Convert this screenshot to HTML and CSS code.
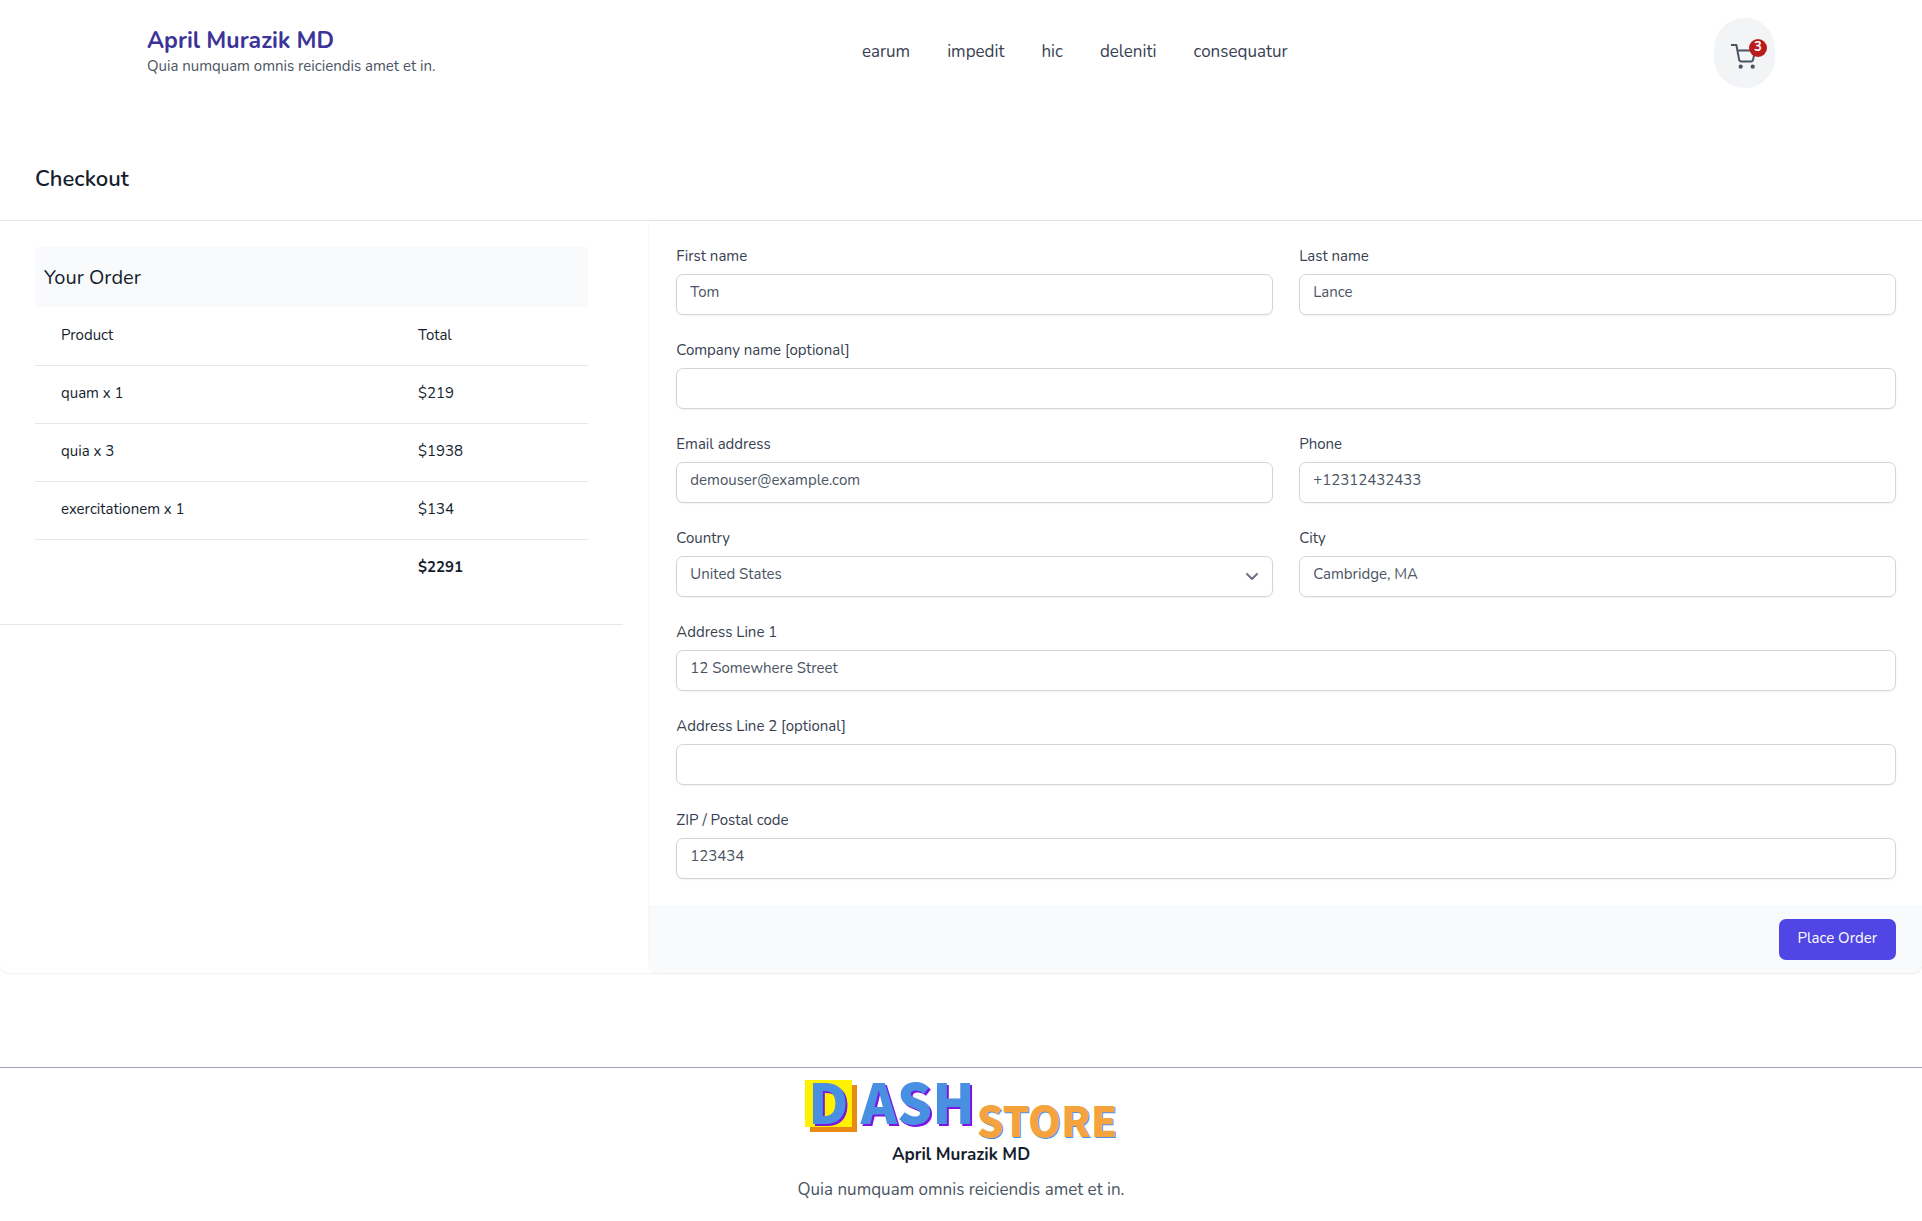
FILE: index.html
```html
<!DOCTYPE html>
<html lang="en">
<head>
<meta charset="utf-8">
<meta name="viewport" content="width=device-width, initial-scale=1">
<title>Checkout</title>
<link rel="stylesheet" href="styles.css">
</head>
<body>
<header class="site-header">
  <div class="brand">
    <a class="brand-name" href="#">April Murazik MD</a>
    <p class="brand-tagline">Quia numquam omnis reiciendis amet et in.</p>
  </div>
  <nav class="site-nav">
    <a href="#">earum</a>
    <a href="#">impedit</a>
    <a href="#">hic</a>
    <a href="#">deleniti</a>
    <a href="#">consequatur</a>
  </nav>
  <button class="cart" type="button" aria-label="Cart">
    <svg class="cart-icon" viewBox="0 0 26 26" fill="none" stroke="currentColor" stroke-width="2" stroke-linejoin="round">
      <path d="M0 2h5.400l2.700 14.600q.4 1.900 2.300 1.900h9.400q1.900 0 2.300-1.900L24 7.500H6.400"/>
      <circle cx="9.700" cy="23.700" r="2.100" fill="currentColor" stroke="none"/>
      <circle cx="21.700" cy="23.700" r="2.100" fill="currentColor" stroke="none"/>
    </svg>
    <span class="cart-count">3</span>
  </button>
</header>
<main>
  <h1 class="page-title">Checkout</h1>
  <div class="checkout">
    <section class="summary">
      <h2 class="summary-title">Your Order</h2>
      <table class="order">
        <thead><tr><th>Product</th><th>Total</th></tr></thead>
        <tbody>
          <tr><td>quam x 1</td><td>$219</td></tr>
          <tr><td>quia x 3</td><td>$1938</td></tr>
          <tr><td>exercitationem x 1</td><td>$134</td></tr>
        </tbody>
        <tfoot><tr><td></td><td>$2291</td></tr></tfoot>
      </table>
    </section>
    <form class="details">
      <div class="fields">
        <div class="field"><label for="first">First name</label><input id="first" type="text" value="Tom"></div>
        <div class="field"><label for="last">Last name</label><input id="last" type="text" value="Lance"></div>
        <div class="field wide"><label for="company">Company name [optional]</label><input id="company" type="text"></div>
        <div class="field"><label for="email">Email address</label><input id="email" type="email" value="demouser@example.com"></div>
        <div class="field"><label for="phone">Phone</label><input id="phone" type="tel" value="+12312432433"></div>
        <div class="field"><label for="country">Country</label>
          <div class="select">
            <select id="country"><option>United States</option></select>
            <svg class="chevron" viewBox="0 0 12 8" fill="none" stroke="currentColor" stroke-width="2" stroke-linecap="round" stroke-linejoin="round"><path d="M1 1l5 5 5-5"/></svg>
          </div>
        </div>
        <div class="field"><label for="city">City</label><input id="city" type="text" value="Cambridge, MA"></div>
        <div class="field wide"><label for="line1">Address Line 1</label><input id="line1" type="text" value="12 Somewhere Street"></div>
        <div class="field wide"><label for="line2">Address Line 2 [optional]</label><input id="line2" type="text"></div>
        <div class="field wide"><label for="zip">ZIP / Postal code</label><input id="zip" type="text" value="123434"></div>
      </div>
      <div class="actions"><button class="submit" type="submit">Place Order</button></div>
    </form>
  </div>
</main>
<footer class="site-footer">
  <div class="logo"><span class="logo-d">D</span><span class="logo-ash">ASH</span><span class="logo-store">STORE</span></div>
  <p class="footer-name">April Murazik MD</p>
  <p class="footer-tagline">Quia numquam omnis reiciendis amet et in.</p>
</footer>
</body>
</html>
```
FILE: styles.css
```css
* {
  box-sizing: border-box;
}

body {
  margin: 0;
  background: #fff;
  color: #161e2e;
  font-family: Nunito, Lato, "Open Sans", sans-serif;
  font-size: 15px;
  line-height: 22px;
}

h1, h2, p {
  margin: 0;
  font-weight: 400;
}

a {
  color: inherit;
  text-decoration: none;
}

button, input, select {
  font: inherit;
}

.site-header {
  display: flex;
  justify-content: space-between;
  padding: 18px 147px 0;
}

.brand {
  padding-top: 8px;
}

.brand-name {
  display: block;
  color: #3c3399;
  font-size: 23px;
  font-weight: 700;
  line-height: 30px;
}

.brand-tagline {
  color: #4b5563;
  line-height: 20px;
}

.site-nav {
  display: flex;
  gap: 37px;
  padding-top: 21px;
  color: #374151;
  font-size: 17px;
  line-height: 26px;
}

.cart {
  position: relative;
  width: 61px;
  height: 70px;
  padding: 6px 0 0;
  border: 0;
  border-radius: 31px;
  background: #f3f4f6;
  color: #4b5563;
}

.cart-icon {
  display: block;
  width: 26px;
  height: 26px;
  margin: 0 auto;
}

.cart-count {
  position: absolute;
  top: 21px;
  right: 8px;
  width: 18px;
  height: 18px;
  border-radius: 50%;
  background: #b91c1c;
  color: #fff;
  font-size: 13px;
  font-weight: 700;
  line-height: 16px;
}

.page-title {
  margin-top: 52px;
  padding: 23px 35px 24px;
  border-bottom: 1px solid #e5e7eb;
  font-size: 22px;
  font-weight: 600;
  line-height: 33px;
}

.checkout {
  display: grid;
  grid-template-columns: repeat(3, minmax(0, 1fr));
  column-gap: 26px;
  border-radius: 0 0 9px 9px;
  box-shadow: 0 1px 2px rgba(0, 0, 0, 0.06);
}

.summary {
  align-self: start;
  padding: 26px 35px 27px;
  border-bottom: 1px solid #e5e7eb;
}

.summary-title {
  padding: 16px 9px 14px;
  background: #f9fafb;
  font-size: 20px;
  line-height: 30px;
}

.order {
  width: 100%;
  border-collapse: collapse;
  table-layout: fixed;
}

.order th, .order td {
  height: 58px;
  padding: 0 26px 2px;
  font-weight: 400;
  text-align: left;
}

.order th:first-child {
  width: 357px;
}

.order tbody tr, .order tfoot tr {
  border-top: 1px solid #e5e7eb;
}

.order tfoot td {
  font-weight: 700;
}

.details {
  grid-column: span 2;
  border-radius: 0 0 9px 9px;
  box-shadow: 0 0 2px rgba(0, 0, 0, 0.12);
}

.fields {
  display: grid;
  grid-template-columns: repeat(2, minmax(0, 1fr));
  gap: 25px 26px;
  padding: 25px 26px 26px 27px;
}

.field.wide {
  grid-column: 1 / -1;
}

.field label {
  display: block;
  margin-bottom: 7px;
  color: #374151;
  line-height: 21px;
}

.field input, .field select {
  display: block;
  width: 100%;
  height: 41px;
  padding: 0 13px 5px;
  border: 1px solid #d1d5db;
  border-radius: 7px;
  background: #fff;
  box-shadow: 0 1px 2px rgba(0, 0, 0, 0.05);
  color: #4b5563;
  appearance: none;
}

.select {
  position: relative;
}

.chevron {
  position: absolute;
  top: 17px;
  right: 15px;
  width: 12px;
  height: 8px;
  color: #6b7280;
  pointer-events: none;
}

.actions {
  display: flex;
  justify-content: flex-end;
  padding: 14px 26px 13px;
  border-radius: 0 0 9px 9px;
  background: #f9fafb;
}

.submit {
  height: 41px;
  padding: 0 19px 4px;
  border: 0;
  border-radius: 7px;
  background: #4f46e5;
  color: #fff;
}

.site-footer {
  display: flex;
  flex-direction: column;
  align-items: center;
  margin-top: 94px;
  padding: 12px 0 18px;
  border-top: 1px solid #9fa6b2;
}

.logo {
  display: flex;
  align-items: flex-start;
  height: 60px;
  font-family: "Noto Sans CJK SC", sans-serif;
  font-weight: 900;
}

.logo-d, .logo-ash {
  height: 47px;
  color: #4a90e2;
  font-size: 55px;
  line-height: 40px;
  text-shadow: 2px 2px #7b16e0;
}

.logo-d {
  width: 47px;
  margin-right: 9px;
  background: #fff100;
  box-shadow: 5px 5px #e98a15;
  text-align: center;
}

.logo-store {
  margin: 20px 0 0 2px;
  color: #f5a33f;
  font-size: 42px;
  line-height: 37px;
  text-shadow: 1px 1px #4a90e2;
}

.footer-name {
  font-size: 17px;
  font-weight: 700;
  line-height: 30px;
}

.footer-tagline {
  margin-top: 7px;
  color: #4b5563;
  font-size: 17px;
  line-height: 26px;
}
```
